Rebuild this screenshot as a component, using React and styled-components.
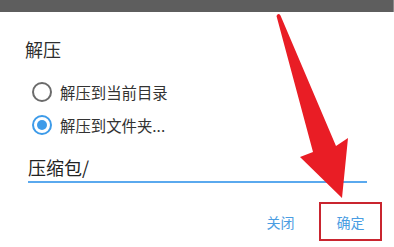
import React, { useState } from "react";
import styled, { createGlobalStyle } from "styled-components";

const GlobalStyle = createGlobalStyle`
  html, body {
    margin: 0;
    padding: 0;
    background: #ffffff;
    overflow: hidden;
  }
  body {
    font-family: "Noto Sans CJK SC", "Noto Sans", Roboto, sans-serif;
  }
`;

const Screen = styled.div`
  position: relative;
  width: 394px;
  height: 247px;
  background: #ffffff;
  overflow: hidden;
`;

const TopBar = styled.div`
  height: 12px;
  background: #5e5e5e;
  border-right: 1px solid #8a8a8a;
`;

const Dialog = styled.div`
  display: flex;
  flex-direction: column;
  padding: 25px 27px 0 25px;
`;

const Title = styled.div`
  font-size: 18px;
  line-height: 24px;
  color: #2e2e2e;
`;

const OptionList = styled.div`
  display: flex;
  flex-direction: column;
  margin-top: 14px;
`;

const Option = styled.label`
  display: flex;
  align-items: center;
  gap: 8px;
  height: 33px;
  padding-left: 7px;
  font-size: 15.4px;
  color: #333333;
  cursor: pointer;
`;

const Radio = styled.span`
  box-sizing: border-box;
  width: 20px;
  height: 20px;
  border-radius: 50%;
  border: 2px solid ${(p) => (p.checked ? "#3d9be9" : "#6b6b6b")};
  display: flex;
  align-items: center;
  justify-content: center;

  &::after {
    content: "";
    width: 10px;
    height: 10px;
    border-radius: 50%;
    background: ${(p) => (p.checked ? "#3d9be9" : "transparent")};
  }
`;

const PathInput = styled.input`
  margin: 14px 0 0 3px;
  padding: 0 0 2px;
  border: none;
  border-bottom: 2px solid #5aa9ee;
  outline: none;
  font-family: inherit;
  font-size: 18px;
  line-height: 24px;
  color: #222222;
  background: transparent;
`;

const Actions = styled.div`
  display: flex;
  justify-content: flex-end;
  gap: 7px;
  margin: 19px -15px 0 0;
`;

const ActionButton = styled.button`
  box-sizing: border-box;
  width: 63px;
  height: 39px;
  padding: 0;
  border: 2px solid ${(p) => (p.highlight ? "#c9252f" : "transparent")};
  background: transparent;
  font-family: inherit;
  font-size: 14px;
  color: #4a9de2;
  text-align: center;
`;

const Arrow = styled.svg`
  position: absolute;
  left: 0;
  top: 0;
  pointer-events: none;
`;

const options = ["解压到当前目录", "解压到文件夹..."];

export default function App() {
  const [selected, setSelected] = useState(1);
  const [path, setPath] = useState("压缩包/");

  return (
    <Screen>
      <GlobalStyle />
      <TopBar />
      <Dialog>
        <Title>解压</Title>
        <OptionList>
          {options.map((label, i) => (
            <Option key={label} onClick={() => setSelected(i)}>
              <Radio checked={selected === i} />
              {label}
            </Option>
          ))}
        </OptionList>
        <PathInput value={path} onChange={(e) => setPath(e.target.value)} />
        <Actions>
          <ActionButton>关闭</ActionButton>
          <ActionButton highlight>确定</ActionButton>
        </Actions>
      </Dialog>
      <Arrow width="394" height="247" viewBox="0 0 394 247">
        <path
          d="M276.5 16 Q278.2 12.5 280.5 15.5 L336 146 L348 138 L342 198 L300 157 L313 152 Z"
          fill="#e91d25"
        />
      </Arrow>
    </Screen>
  );
}
